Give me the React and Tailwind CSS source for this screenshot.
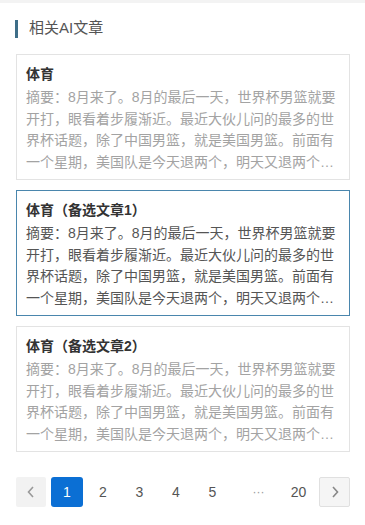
import React from 'react';

const summary = '摘要：8月来了。8月的最后一天，世界杯男篮就要开打，眼看着步履渐近。最近大伙儿问的最多的世界杯话题，除了中国男篮，就是美国男篮。前面有一个星期，美国队是今天退两个，明天又退两个，后天再退一个。';

const articles = [
    { title: '体育', active: false },
    { title: '体育（备选文章1）', active: true },
    { title: '体育（备选文章2）', active: false },
];

function ArticleCard({ title, active }) {
    return (
        <div className={active ? 'border border-[#4a86ad] bg-white pl-[9px] pr-[8px] pt-[9px] pb-[6px]' : 'border border-[#e3e3e3] bg-white pl-[9px] pr-[8px] pt-[9px] pb-[6px]'}>
            <h3 className="text-[14px] leading-[20px] font-bold text-[#333]">{title}</h3>
            <p className={active ? 'mt-[3px] text-[14px] leading-[21.5px] text-[#555] line-clamp-4' : 'mt-[3px] text-[14px] leading-[21.5px] text-[#a3a3a3] line-clamp-4'}>
                {summary}
            </p>
        </div>
    );
}

export default function App() {
    return (
        <div className="min-h-screen bg-white" style={{ fontFamily: '"Liberation Sans", "Noto Sans CJK SC", sans-serif' }}>
            {/* top shadow */}
            <div className="h-[3px] bg-[#f3f3f3]" />

            {/* Header */}
            <div className="flex items-center pl-[15px] pt-[16px] h-[35px]">
                <div className="w-[3px] h-[18px] bg-[#3e6e88]" />
                <h2 className="ml-[11px] text-[15px] text-[#555]">相关AI文章</h2>
            </div>

            {/* Cards */}
            <div className="flex flex-col gap-[10px] ml-[16px] w-[334px] mt-[16px]">
                {articles.map((a) => (
                    <ArticleCard key={a.title} title={a.title} active={a.active} />
                ))}
            </div>

            {/* Pagination */}
            <div className="flex items-center ml-[16px] mt-[25px] w-[334px] text-[14px] text-[#555]">
                <button className="w-[30px] h-[30px] flex items-center justify-center bg-[#f2f2f2] rounded-[2px] text-[#999]">
                    <svg width="10" height="14" viewBox="0 0 10 14" fill="none" stroke="currentColor" strokeWidth="1.6">
                        <path d="M7 2L2.5 7L7 12" />
                    </svg>
                </button>
                <button className="ml-[5px] w-[32px] h-[30px] flex items-center justify-center bg-[#0b6fd4] text-white rounded-[3px]">1</button>
                <span className="ml-[4px] w-[32px] h-[30px] flex items-center justify-center">2</span>
                <span className="ml-[4.5px] w-[32px] h-[30px] flex items-center justify-center">3</span>
                <span className="ml-[4.5px] w-[32px] h-[30px] flex items-center justify-center">4</span>
                <span className="ml-[4.5px] w-[32px] h-[30px] flex items-center justify-center">5</span>
                <span className="ml-[10px] w-[40px] h-[30px] flex items-center justify-center text-[#999] text-[12px]">···</span>
                <span className="ml-[4px] w-[32px] h-[30px] flex items-center justify-center">20</span>
                <button className="ml-auto w-[31px] h-[30px] flex items-center justify-center bg-[#f5f5f5] border border-[#e0e0e0] rounded-[2px] text-[#888]">
                    <svg width="10" height="14" viewBox="0 0 10 14" fill="none" stroke="currentColor" strokeWidth="1.6">
                        <path d="M3 2L7.5 7L3 12" />
                    </svg>
                </button>
            </div>
        </div>
    );
}
